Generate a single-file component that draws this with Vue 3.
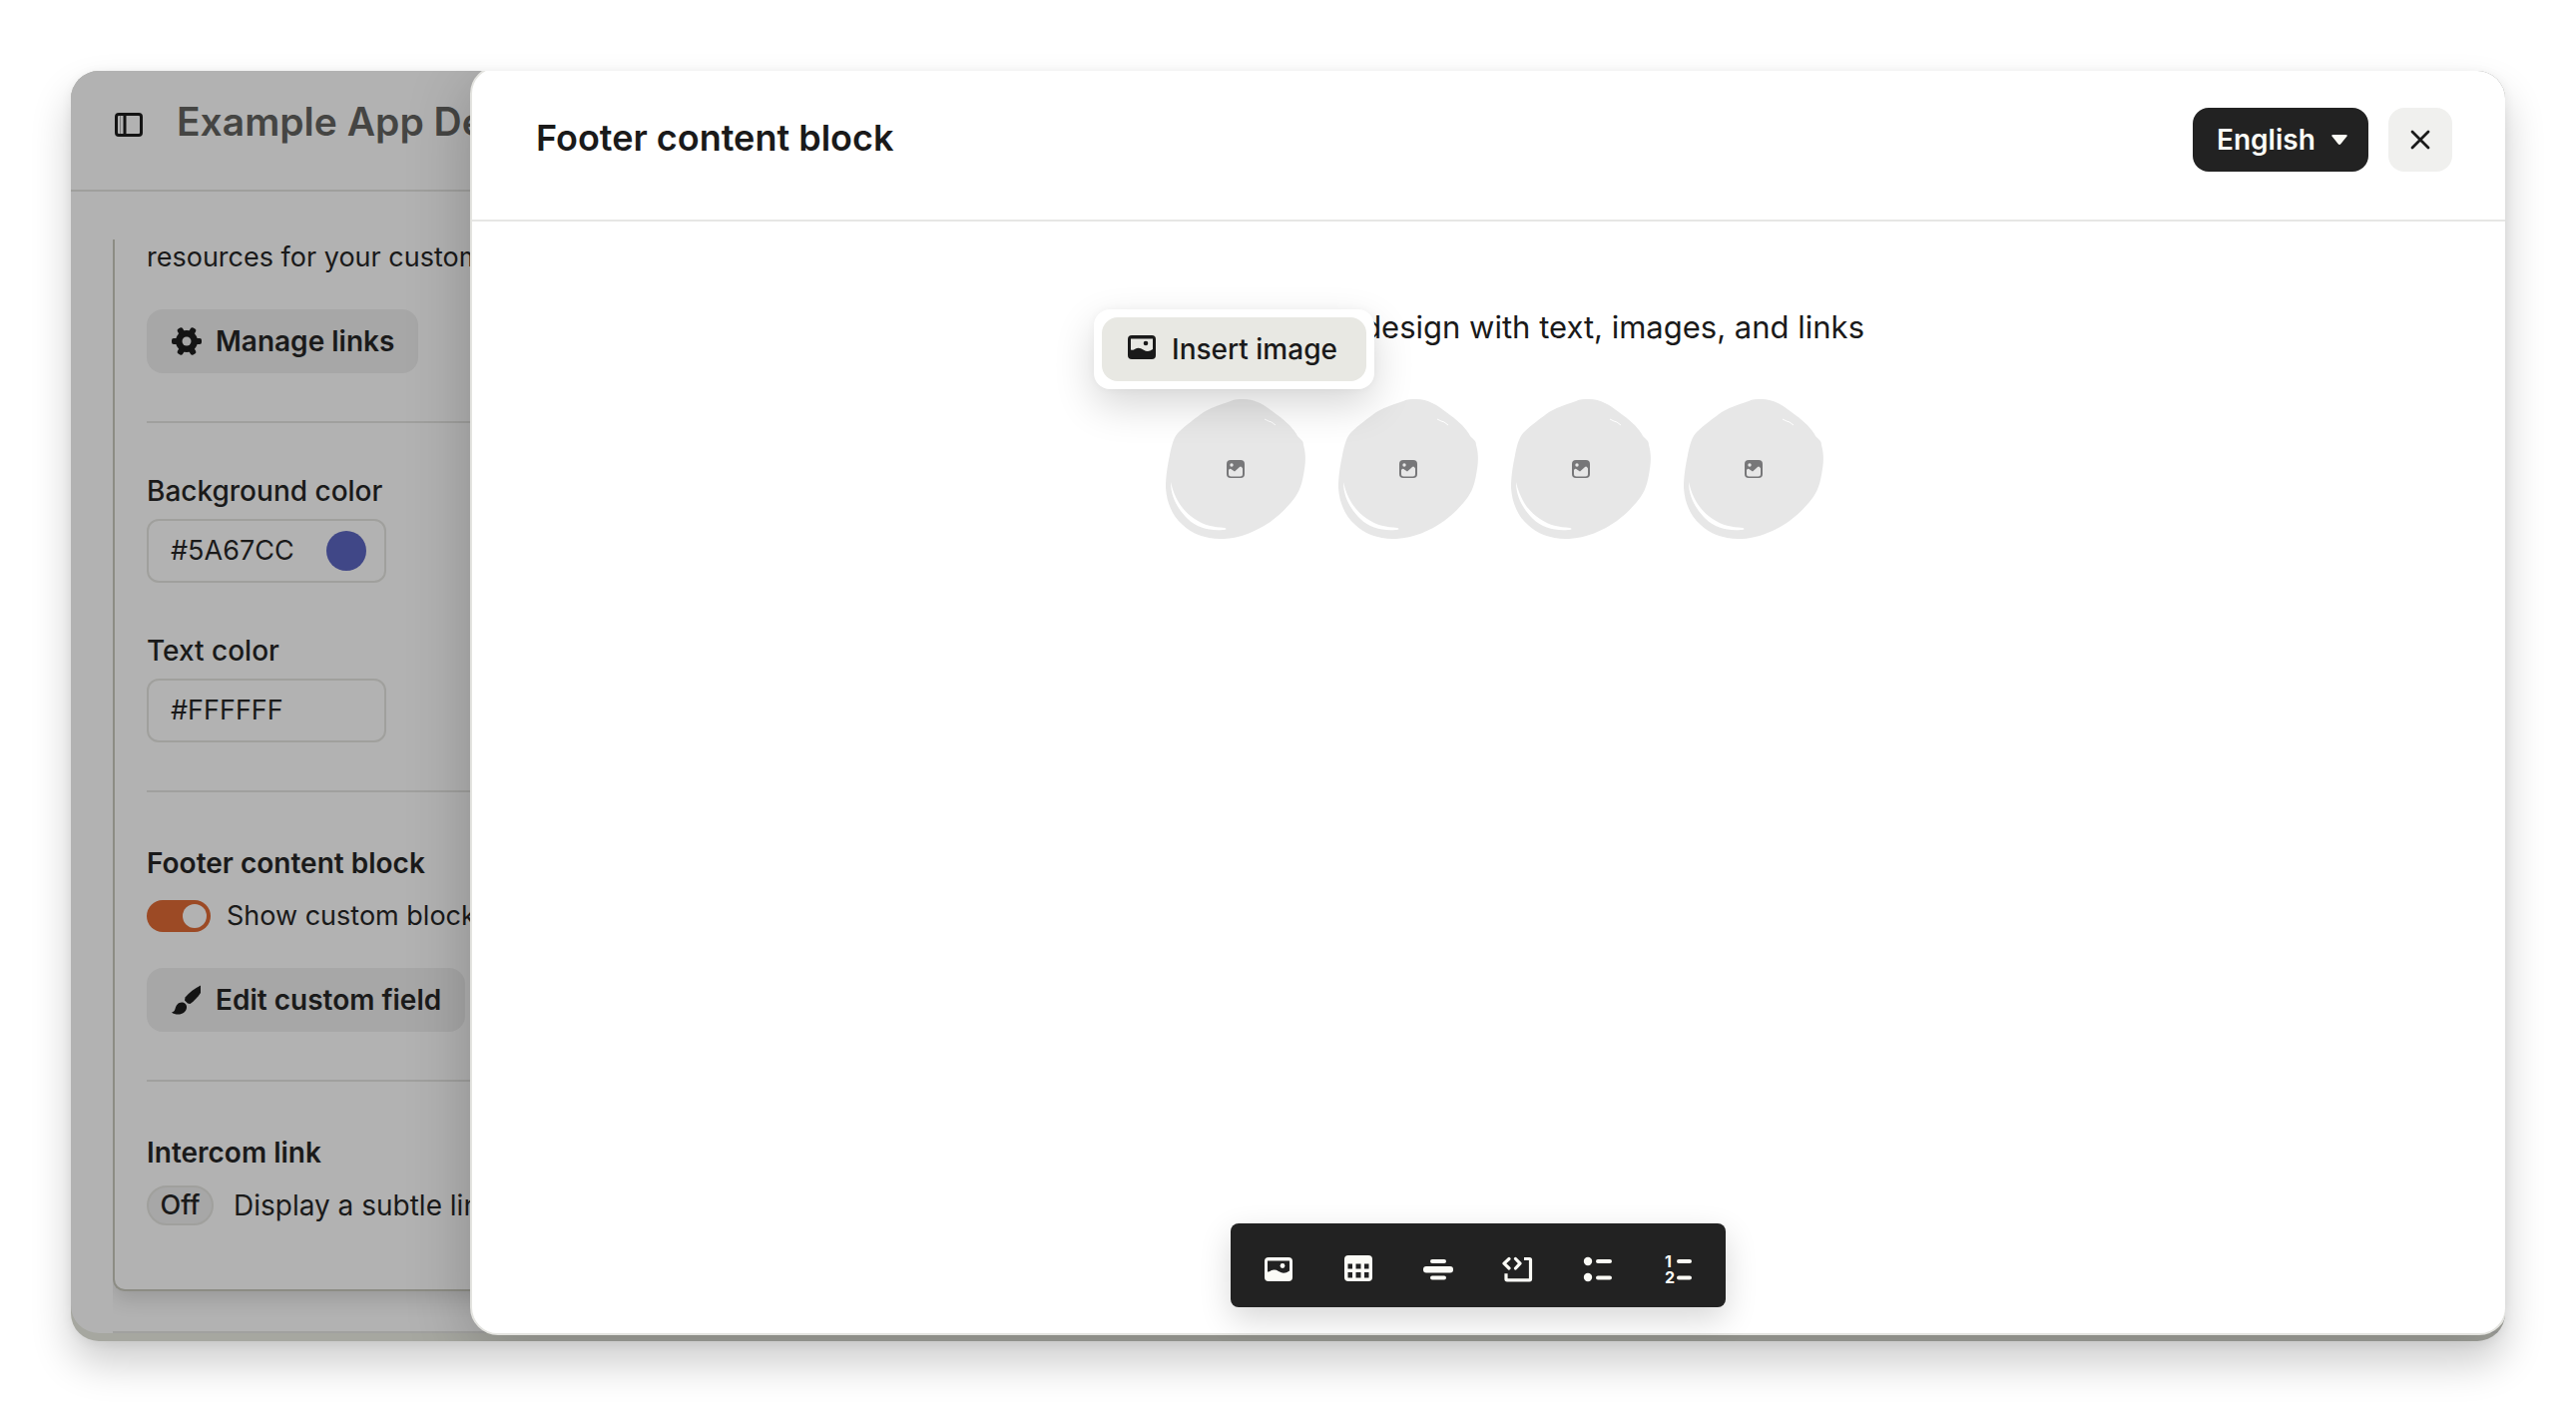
<script setup>
import { ref } from 'vue'

const backgroundColor = ref('#5A67CC')
const textColor = ref('#FFFFFF')
const showBlock = ref(true)
const language = ref('English')
const placeholders = [1, 2, 3, 4]
</script>

<template>
  <div class="page">
    <div class="window">
      <div class="panel">
        <header class="panel-header">
          <button class="icon-button" type="button" aria-label="Toggle sidebar">
            <svg width="28" height="24" viewBox="0 0 28 24" fill="none" stroke="#141414">
              <rect x="1.5" y="1.5" width="25" height="21" rx="2.5" stroke-width="3" />
              <path d="M10 2v20" stroke-width="3" />
              <path d="M5.5 3v18" stroke="#7d7d7d" stroke-width="1" />
            </svg>
          </button>
          <h1>Example App Demo</h1>
        </header>

        <div class="scroller">
          <div class="card">
            <section>
              <p>resources for your customers</p>
              <button class="button spaced" type="button">
                <svg width="30" height="30" viewBox="0 0 30 30">
                  <g fill="#141414">
                    <circle cx="15" cy="15" r="11" />
                    <g v-for="a in [0, 60, 120, 180, 240, 300]" :key="a" :transform="`rotate(${a} 15 15)`">
                      <rect x="23" y="12" width="7" height="6" rx="2" />
                    </g>
                  </g>
                  <circle cx="15" cy="15" r="4.5" fill="#a7a7a7" />
                </svg>
                Manage links
              </button>
            </section>

            <section class="colors">
              <div class="field">
                <label for="bg-color">Background color</label>
                <div class="input-box">
                  <input id="bg-color" v-model="backgroundColor" type="text" />
                  <span class="swatch"></span>
                </div>
              </div>
              <div class="field">
                <label for="text-color">Text color</label>
                <div class="input-box">
                  <input id="text-color" v-model="textColor" type="text" />
                </div>
              </div>
            </section>

            <section class="titled">
              <h2>Footer content block</h2>
              <label class="toggle-row">
                <input v-model="showBlock" class="toggle" type="checkbox" />
                Show custom block
              </label>
              <button class="button spaced" type="button">
                <svg width="30" height="30" viewBox="0 0 30 30" fill="#141414">
                  <path d="M29 0.5v7.5c-3 4.5-6.500 8-10.500 11l-2.500-.5-3-3 .5-3C17.500 7.500 23 3.500 29 0.500z" />
                  <path d="M10 17.500c3.500 0 5.500 2.500 5 5.500-.6 4-4 6.500-8.500 6.500-2.500 0-5-.6-6.500-2 1.800-.4 2.800-1.300 3.500-3.500.9-3.600 3-6.500 6.500-6.500z" />
                </svg>
                Edit custom field
              </button>
            </section>

            <section class="titled">
              <h2>Intercom link</h2>
              <div class="pill-row">
                <button class="pill" type="button">Off</button>
                <span>Display a subtle link</span>
              </div>
            </section>
          </div>
          <hr />
        </div>
      </div>

      <div class="drawer">
        <header class="drawer-header">
          <h2>Footer content block</h2>
          <div class="actions">
            <div class="language">
              <select v-model="language" aria-label="Language">
                <option>English</option>
              </select>
              <svg class="caret" width="16" height="10" viewBox="0 0 16 10" fill="#fbfbf6">
                <path d="M1.500 0h13q2 0 1 1.600L9.500 9Q8 10.800 6.500 9L.5 1.600Q-.5 0 1.500 0z" />
              </svg>
            </div>
            <button class="close" type="button" aria-label="Close">
              <svg width="20" height="20" viewBox="0 0 20 20" fill="none" stroke="#1a1a1a" stroke-width="2.800" stroke-linecap="round">
                <path d="M2 2l16 16M18 2L2 18" />
              </svg>
            </button>
          </div>
        </header>

        <div class="canvas">
          <div class="document">
            <p>design with text, images, and links</p>
            <div class="placeholders">
              <svg v-for="n in placeholders" :key="n" width="140" height="140" viewBox="0 0 140 140">
                <path
                  fill="#e7e7e7"
                  d="M78 0C90 0 99 6 108 13C118 20 126 27 131 35C133 40 138 40 138 46C141 56 140 66 138 76C136 88 132 96 126 103C120 110 114 116 106 122C92 132 75 139 58 140C42 141 26 135 17 126C7 118 1 104 0 89C0 76 2 66 4 56C6 46 8 38 13 33C20 26 30 19 38 13C48 7 60 4 65 2C69 0 73 0 78 0z"
                />
                <path fill="#fff" d="M5 83C9 101 18 113 29 120C39 127 48 128 59 129C62 130 60 131 57 131C44 132 31 129 22 120C12 110 5 98 5 83z" />
                <path fill="none" stroke="#fff" stroke-width="1" d="M99 20l4 2 3 1 4 3" />
                <rect x="61" y="61" width="18" height="18" rx="4" fill="#777779" />
                <circle cx="66" cy="66" r="1.700" fill="#e7e7e7" />
                <path fill="#e7e7e7" d="M63 71q1.500-2 3-.5l3 2 5-4.500q1-1 2 0l1 1.500v5.500q0 2.500-2.500 2.500h-9q-2.500 0-2.500-2.500z" />
              </svg>
            </div>
            <div class="menu">
              <button class="menu-item" type="button">
                <svg width="28" height="24" viewBox="0 0 28 24">
                  <rect width="28" height="24" rx="4" fill="#1a1a1a" />
                  <path fill="#e8e8e3" d="M3 3.500h22v10.500q-3 2-5 2-2 0-4.500-1.500Q12 12 9 13q-2 .5-3 1.500-1.500.5-3 0z" />
                  <circle cx="18" cy="8" r="2.300" fill="#1a1a1a" />
                </svg>
                Insert image
              </button>
            </div>
          </div>

          <div class="toolbar" role="toolbar" aria-label="Insert">
            <button type="button" aria-label="Image">
              <svg width="30" height="30" viewBox="0 0 30 30">
                <rect x="1" y="3" width="28" height="24" rx="4" fill="#fbfbf6" />
                <path fill="#222" d="M4 6.500h22v10q-3 2.300-6 2.300-2 0-5-1.800Q12 15 9 15.800q-2 .5-2.500 1.300-1 .6-2.500.4z" />
                <circle cx="19" cy="11.500" r="2.400" fill="#fbfbf6" />
              </svg>
            </button>
            <button type="button" aria-label="Table">
              <svg width="30" height="30" viewBox="0 0 30 30">
                <rect x="1" y="1" width="28" height="26" rx="4" fill="#fbfbf6" />
                <path fill="#222" d="M4.500 9.500h4.500v5h-4.500zM12.500 9.500h5v5h-5zM21 9.500h4.500v5h-4.500zM4.500 18h4.500v5.500h-4.500zM12.500 18h5v5.500h-5zM21 18h4.500v5.500h-4.500z" />
              </svg>
            </button>
            <button type="button" aria-label="Divider">
              <svg width="30" height="30" viewBox="0 0 30 30" fill="#fbfbf6">
                <rect x="7" y="5" width="16" height="4" rx="2" />
                <rect x="0" y="12" width="30" height="6.500" rx="3" />
                <rect x="7" y="21.500" width="16" height="4" rx="2" />
              </svg>
            </button>
            <button type="button" aria-label="Code">
              <svg width="30" height="30" viewBox="0 0 30 30" fill="none" stroke="#fbfbf6" stroke-linecap="round" stroke-linejoin="round">
                <path stroke-width="3.200" d="M6 4.500L1 9.200 6 14M12.500 4.500L17 9.200 12.500 14" />
                <path stroke-width="3.200" stroke-linecap="butt" d="M21 4.500h5.500q1 0 1 1v19.300q0 1-1 1h-22.500q-1 0-1-1v-5.500" />
              </svg>
            </button>
            <button type="button" aria-label="Bulleted list">
              <svg width="30" height="30" viewBox="0 0 30 30" fill="#fbfbf6">
                <circle cx="5" cy="7" r="4.200" />
                <circle cx="5" cy="23" r="4.200" />
                <rect x="13" y="5" width="16" height="4" rx="2" />
                <rect x="13" y="21.500" width="16" height="4" rx="2" />
              </svg>
            </button>
            <button type="button" aria-label="Numbered list">
              <svg width="30" height="30" viewBox="0 0 30 30" fill="#fbfbf6">
                <text x="2" y="13">1</text>
                <text x="2" y="29">2</text>
                <rect x="14" y="5" width="15" height="4" rx="2" />
                <rect x="14" y="21.500" width="15" height="4" rx="2" />
              </svg>
            </button>
          </div>
        </div>
      </div>
    </div>
  </div>
</template>

<style>
body {
  background: #fff;
}
</style>

<style scoped>
* {
  box-sizing: border-box;
}

.page {
  padding: 71px;
  font-family: Inter, "Liberation Sans", sans-serif;
  font-size: 28px;
  line-height: 36px;
  color: #1a1a1a;
  overflow: hidden;
}

h1,
h2,
p {
  margin: 0;
}

button,
input,
select {
  margin: 0;
  padding: 0;
  border: 0;
  font: inherit;
  color: inherit;
  background: none;
}

svg {
  display: block;
  flex: none;
  overflow: visible;
}

.window {
  display: grid;
  overflow: hidden;
  border-radius: 28px;
  background: #a6a7a0;
  box-shadow: 0 22px 40px rgba(0, 0, 0, 0.2), 0 2px 12px rgba(0, 0, 0, 0.06);
}

/* dimmed settings page */
.panel {
  grid-area: 1 / 1;
  min-width: 0;
  margin-bottom: 8px;
  border-radius: 0 0 28px 28px;
  background: #b2b2b2;
  white-space: nowrap;
}

.panel-header {
  display: flex;
  align-items: center;
  gap: 34px;
  height: 121px;
  padding: 0 44px 14px;
  border-bottom: 2px solid #9f9f9d;
}

.panel-header h1 {
  padding-bottom: 4px;
  font-size: 39px;
  line-height: 48px;
  font-weight: 600;
  color: #454543;
}

.icon-button {
  padding-top: 2px;
}

.scroller {
  margin: 48px 0 0 42px;
  overflow: hidden;
}

.scroller hr {
  height: 2px;
  margin: 40px 0 0;
  border: 0;
  background: #a1a19f;
}

.card {
  padding-left: 32px;
  border: solid #8c8c84;
  border-width: 0 0 2px 2px;
  border-radius: 0 0 0 12px;
  box-shadow: 0 8px 20px rgba(0, 0, 0, 0.14);
}

.card p,
.toggle-row,
.input-box {
  font-size: 27px;
}

section {
  padding-bottom: 48px;
  border-bottom: 2px solid #a0a09e;
}

section:last-child {
  padding-bottom: 64px;
  border-bottom: 0;
}

.titled {
  padding-top: 53px;
}

.titled h2 {
  font-size: 28px;
  font-weight: 600;
}

.button {
  display: flex;
  align-items: center;
  gap: 14px;
  height: 64px;
  padding: 0 24px 0 25px;
  border-radius: 16px;
  background: #a7a7a7;
  font-weight: 600;
}

.spaced {
  margin-top: 34px;
}

.colors {
  display: grid;
  gap: 50px;
  padding-top: 50px;
}

.field label {
  display: block;
  margin-bottom: 10px;
  font-weight: 500;
}

.input-box {
  display: flex;
  align-items: center;
  width: 240px;
  height: 64px;
  padding: 0 18px 0 22px;
  border: 2px solid #a0a09d;
  border-radius: 12px;
}

.input-box input {
  flex: 1;
  min-width: 0;
}

.swatch {
  width: 40px;
  height: 40px;
  border-radius: 50%;
  background: #404787;
}

.toggle-row {
  display: flex;
  align-items: center;
  gap: 16px;
  margin-top: 17px;
}

.toggle {
  display: flex;
  flex: none;
  justify-content: flex-start;
  width: 64px;
  height: 32px;
  padding: 4px;
  border-radius: 16px;
  background: #8c8c84;
  appearance: none;
}

.toggle:checked {
  justify-content: flex-end;
  background: #9c4a25;
}

.toggle::before {
  content: "";
  width: 24px;
  height: 24px;
  border-radius: 50%;
  background: #b2b2b2;
}

.pill-row {
  display: flex;
  align-items: center;
  gap: 20px;
  margin-top: 15px;
}

.pill {
  width: 67px;
  height: 40px;
  border: 2px solid #a0a09d;
  border-radius: 20px;
  background: #a7a7a7;
  font-size: 27px;
  font-weight: 500;
}

/* editor drawer */
.drawer {
  grid-area: 1 / 1;
  z-index: 1;
  display: flex;
  flex-direction: column;
  margin: -5px -2px 6px 400px;
  border: 2px solid #e4e4e0;
  border-radius: 28px;
  background: #fff;
  box-shadow: 0 16px 64px rgba(0, 0, 0, 0.22);
}

.drawer-header {
  display: flex;
  justify-content: space-between;
  align-items: flex-start;
  height: 154px;
  padding: 40px 53px 0 64px;
  border-bottom: 2px solid #e6e6e4;
}

.drawer-header h2 {
  padding-top: 8px;
  font-size: 36px;
  line-height: 44px;
  font-weight: 600;
}

.actions {
  display: flex;
  gap: 20px;
}

.language {
  display: grid;
  align-items: center;
}

.language > * {
  grid-area: 1 / 1;
}

.language select {
  width: 176px;
  height: 64px;
  padding-left: 24px;
  border-radius: 16px;
  background: #222;
  color: #fbfbf6;
  font-weight: 600;
  appearance: none;
}

.caret {
  justify-self: end;
  margin-right: 21px;
  pointer-events: none;
}

.close {
  display: grid;
  place-items: center;
  width: 64px;
  height: 64px;
  border-radius: 16px;
  background: #f0f0ee;
}

.canvas {
  display: flex;
  flex: 1;
  flex-direction: column;
  justify-content: space-between;
  align-items: center;
  padding: 85px 0 26px;
}

.document {
  position: relative;
  width: 742px;
  margin-left: 11px;
}

.document p {
  font-size: 31px;
  line-height: 42px;
  text-align: right;
}

.placeholders {
  display: flex;
  justify-content: center;
  gap: 33px;
  margin-top: 51px;
}

.menu {
  position: absolute;
  top: 3px;
  left: -30px;
  padding: 8px;
  border-radius: 16px;
  background: #fff;
  box-shadow: 0 16px 40px rgba(0, 0, 0, 0.16), 0 0 8px rgba(0, 0, 0, 0.04);
}

.menu-item {
  display: flex;
  align-items: center;
  gap: 16px;
  width: 265px;
  height: 64px;
  padding: 0 26px;
  border-radius: 16px;
  background: #e8e8e3;
  font-weight: 500;
  white-space: nowrap;
}

.menu-item svg {
  margin-bottom: 4px;
}

.toolbar {
  display: flex;
  gap: 32px;
  margin-right: 22px;
  padding: 22px 24px 14px;
  border-radius: 8px;
  background: #222;
  box-shadow: 0 12px 32px rgba(0, 0, 0, 0.16);
}

.toolbar button {
  display: grid;
  place-items: center;
  width: 48px;
  height: 48px;
}

.toolbar text {
  font-size: 16px;
  font-weight: 700;
}
</style>
